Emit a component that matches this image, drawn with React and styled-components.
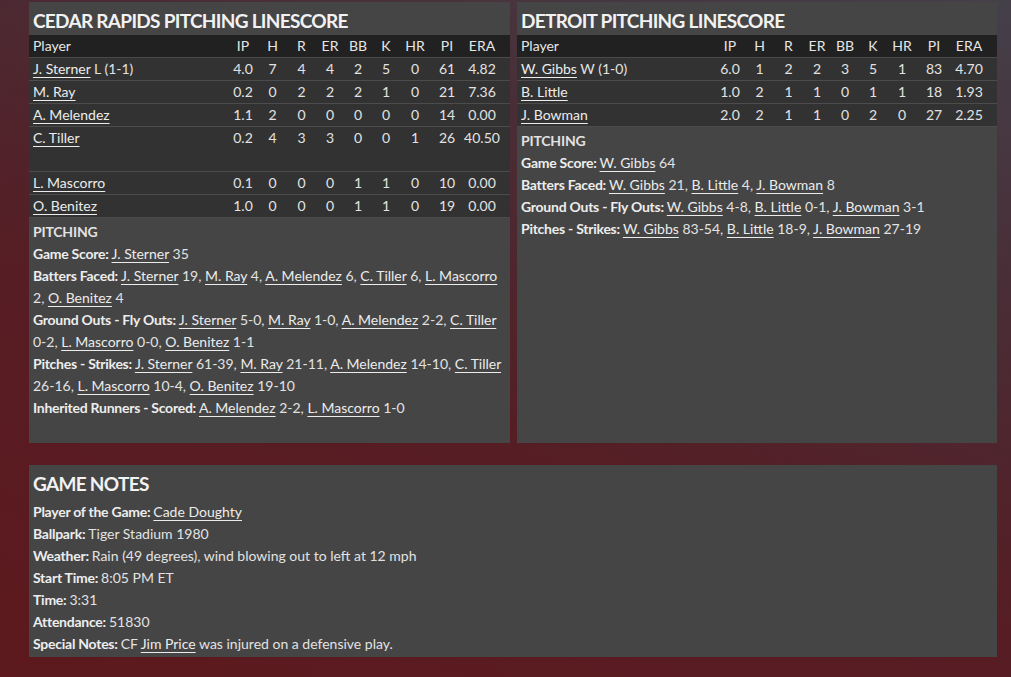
import React from "react";
import styled, { createGlobalStyle } from "styled-components";

const Global = createGlobalStyle`
  html, body { margin: 0; padding: 0; }
  body {
    width: 1011px;
    min-height: 677px;
    font-family: "Lato", "Open Sans", sans-serif;
    background: linear-gradient(200deg, #44404a 0%, #4a2c35 30%, #561d24 60%, #5d191d 100%);
    overflow: hidden;
  }
`;

const Page = styled.div`
  box-sizing: border-box;
  width: 1011px;
  height: 677px;
  padding: 2px 14px 0 29px;
  display: flex;
  flex-direction: column;
  gap: 22px;
`;

const TopRow = styled.div`
  display: grid;
  grid-template-columns: 481px 480px;
  gap: 7px;
  height: 441px;
`;

const Panel = styled.section`
  background: #454545;
  color: #e2e2e2;
  font-size: 14px;
  display: flex;
  flex-direction: column;
`;

const Title = styled.h2`
  margin: 0;
  padding: 4px 4px 0;
  height: 29px;
  line-height: 29px;
  font-size: 19px;
  letter-spacing: -0.7px;
  font-weight: 700;
  color: #f2f2f2;
  text-transform: uppercase;
`;

const cols = "1fr 30px 29px 29px 28px 28px 28px 30px 34px 36px";

const HeadRow = styled.div`
  display: grid;
  grid-template-columns: ${cols};
  padding-right: 10px;
  background: #212121;
  height: 22px;
  line-height: 22px;
  border-bottom: 1px solid #4a4a4a;
  color: #e6e6e6;
`;

const Row = styled.div`
  display: grid;
  grid-template-columns: ${cols};
  padding-right: 10px;
  background: #323232;
  height: ${(p) => (p.$tall ? "44px" : "22px")};
  line-height: 22px;
  border-bottom: 1px solid #4c4c4c;
  align-items: start;
`;

const NameCell = styled.div`
  padding-left: 4px;
  white-space: nowrap;
`;

const Cell = styled.div`
  text-align: center;
  white-space: nowrap;
`;

const Link = styled.span`
  text-decoration: underline;
  text-underline-offset: 3px;
  white-space: nowrap;
  color: #ececec;
`;

const Notes = styled.div`
  padding: 3px 4px 4px;
  line-height: 22px;
`;

const Heading = styled.div`
  font-weight: 700;
  letter-spacing: -0.2px;
  text-transform: uppercase;
`;

const Line = styled.div``;

const Label = styled.b`
  font-weight: 700;
  letter-spacing: -0.25px;
  color: #ededed;
  margin-right: 3px;
`;

const GamePanel = styled(Panel)`
  height: 192px;
  width: 968px;
`;

const GameBody = styled.div`
  padding: 3px 4px 2px;
  line-height: 22px;
`;

const crPitchers = [
  ["J. Sterner", "L (1-1)", "4.0", 7, 4, 4, 2, 5, 0, 61, "4.82"],
  ["M. Ray", "", "0.2", 0, 2, 2, 2, 1, 0, 21, "7.36"],
  ["A. Melendez", "", "1.1", 2, 0, 0, 0, 0, 0, 14, "0.00"],
  ["C. Tiller", "", "0.2", 4, 3, 3, 0, 0, 1, 26, "40.50", true],
  ["L. Mascorro", "", "0.1", 0, 0, 0, 1, 1, 0, 10, "0.00"],
  ["O. Benitez", "", "1.0", 0, 0, 0, 1, 1, 0, 19, "0.00"],
];

const detPitchers = [
  ["W. Gibbs", "W (1-0)", "6.0", 1, 2, 2, 3, 5, 1, 83, "4.70"],
  ["B. Little", "", "1.0", 2, 1, 1, 0, 1, 1, 18, "1.93"],
  ["J. Bowman", "", "2.0", 2, 1, 1, 0, 2, 0, 27, "2.25"],
];

const heads = ["IP", "H", "R", "ER", "BB", "K", "HR", "PI", "ERA"];

function Linescore({ rows }) {
  return (
    <div>
      <HeadRow>
        <NameCell>Player</NameCell>
        {heads.map((h) => (
          <Cell key={h}>{h}</Cell>
        ))}
      </HeadRow>
      {rows.map((r) => (
        <Row key={r[0]} $tall={r[11]}>
          <NameCell>
            <Link>{r[0]}</Link>
            {r[1] ? " " + r[1] : ""}
          </NameCell>
          {r.slice(2, 11).map((v, i) => (
            <Cell key={i}>{v}</Cell>
          ))}
        </Row>
      ))}
    </div>
  );
}

function List({ items }) {
  return items.map(([n, v], i) => (
    <React.Fragment key={i}>
      {i > 0 ? ", " : ""}
      <Link>{n}</Link> {v}
    </React.Fragment>
  ));
}

export default function App() {
  return (
    <>
      <Global />
      <Page>
        <TopRow>
          <Panel>
            <Title>Cedar Rapids Pitching Linescore</Title>
            <Linescore rows={crPitchers} />
            <Notes>
              <Heading>Pitching</Heading>
              <Line>
                <Label>Game Score:</Label>
                <List items={[["J. Sterner", "35"]]} />
              </Line>
              <Line>
                <Label>Batters Faced:</Label>
                <List
                  items={[
                    ["J. Sterner", "19"],
                    ["M. Ray", "4"],
                    ["A. Melendez", "6"],
                    ["C. Tiller", "6"],
                    ["L. Mascorro", "2"],
                    ["O. Benitez", "4"],
                  ]}
                />
              </Line>
              <Line>
                <Label>Ground Outs - Fly Outs:</Label>
                <List
                  items={[
                    ["J. Sterner", "5-0"],
                    ["M. Ray", "1-0"],
                    ["A. Melendez", "2-2"],
                    ["C. Tiller", "0-2"],
                    ["L. Mascorro", "0-0"],
                    ["O. Benitez", "1-1"],
                  ]}
                />
              </Line>
              <Line>
                <Label>Pitches - Strikes:</Label>
                <List
                  items={[
                    ["J. Sterner", "61-39"],
                    ["M. Ray", "21-11"],
                    ["A. Melendez", "14-10"],
                    ["C. Tiller", "26-16"],
                    ["L. Mascorro", "10-4"],
                    ["O. Benitez", "19-10"],
                  ]}
                />
              </Line>
              <Line>
                <Label>Inherited Runners - Scored:</Label>
                <List
                  items={[
                    ["A. Melendez", "2-2"],
                    ["L. Mascorro", "1-0"],
                  ]}
                />
              </Line>
            </Notes>
          </Panel>
          <Panel>
            <Title>Detroit Pitching Linescore</Title>
            <Linescore rows={detPitchers} />
            <Notes>
              <Heading>Pitching</Heading>
              <Line>
                <Label>Game Score:</Label>
                <List items={[["W. Gibbs", "64"]]} />
              </Line>
              <Line>
                <Label>Batters Faced:</Label>
                <List
                  items={[
                    ["W. Gibbs", "21"],
                    ["B. Little", "4"],
                    ["J. Bowman", "8"],
                  ]}
                />
              </Line>
              <Line>
                <Label>Ground Outs - Fly Outs:</Label>
                <List
                  items={[
                    ["W. Gibbs", "4-8"],
                    ["B. Little", "0-1"],
                    ["J. Bowman", "3-1"],
                  ]}
                />
              </Line>
              <Line>
                <Label>Pitches - Strikes:</Label>
                <List
                  items={[
                    ["W. Gibbs", "83-54"],
                    ["B. Little", "18-9"],
                    ["J. Bowman", "27-19"],
                  ]}
                />
              </Line>
            </Notes>
          </Panel>
        </TopRow>
        <GamePanel>
          <Title>Game Notes</Title>
          <GameBody>
            <Line>
              <Label>Player of the Game:</Label>
              <Link>Cade Doughty</Link>
            </Line>
            <Line>
              <Label>Ballpark:</Label>Tiger Stadium 1980
            </Line>
            <Line>
              <Label>Weather:</Label>Rain (49 degrees), wind blowing out to left at 12 mph
            </Line>
            <Line>
              <Label>Start Time:</Label>8:05 PM ET
            </Line>
            <Line>
              <Label>Time:</Label>3:31
            </Line>
            <Line>
              <Label>Attendance:</Label>51830
            </Line>
            <Line>
              <Label>Special Notes:</Label>CF <Link>Jim Price</Link> was injured on a defensive play.
            </Line>
          </GameBody>
        </GamePanel>
      </Page>
    </>
  );
}
